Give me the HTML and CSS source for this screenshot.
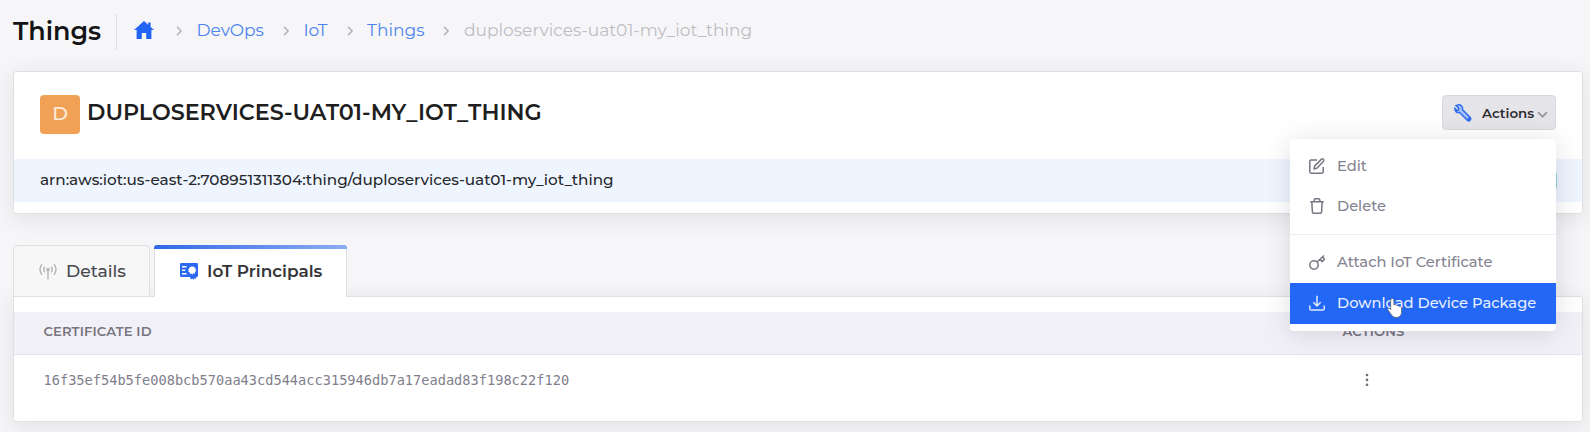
FILE: index.html
```html
<!DOCTYPE html>
<html lang="en">
<head>
<meta charset="utf-8">
<title>Things</title>
<link rel="stylesheet" href="styles.css">
</head>
<body>
<header class="topbar">
  <h1 class="page-title">Things</h1>
  <nav class="crumbs">
    <svg class="home" viewBox="0 0 20 18"><path d="M10 0 0 9h2.600v9h5.200v-6h4.400v6h5.200V9H20L16.600 6V1.500h-2.400v2.300z"/></svg>
    <svg class="sep" viewBox="0 0 6 10"><path d="M1 .8 5 5 1 9.200"/></svg>
    <a>DevOps</a>
    <svg class="sep" viewBox="0 0 6 10"><path d="M1 .8 5 5 1 9.200"/></svg>
    <a>IoT</a>
    <svg class="sep" viewBox="0 0 6 10"><path d="M1 .8 5 5 1 9.200"/></svg>
    <a>Things</a>
    <svg class="sep" viewBox="0 0 6 10"><path d="M1 .8 5 5 1 9.200"/></svg>
    <span class="current">duploservices-uat01-my_iot_thing</span>
  </nav>
</header>
<main>
  <section class="card summary">
    <div class="summary-head">
      <span class="avatar">D</span>
      <h2 class="name">DUPLOSERVICES-UAT01-MY_IOT_THING</h2>
      <div class="actions">
        <button class="actions-btn">
          <svg class="wrench" viewBox="0 0 18 18"><path d="M2.200 1.600 4.800 4.200 4.400 6 2.900 6.400.9 4.300C.5 7 2.600 9.100 5.600 8.500l7.900 7.900c1.800 1.500 4.300-1 2.800-2.800L8.500 5.700C9.100 2.700 6.900.3 3.900.9z"/><circle cx="14.800" cy="14.900" r=".7"/></svg>
          <span>Actions</span>
          <svg class="caret" viewBox="0 0 11 7"><path d="M1 1.200 5.500 5.700 10 1.200"/></svg>
        </button>
        <div class="menu">
          <a class="item"><svg viewBox="0 0 16 16"><path d="M8 2H2.200Q.8 2 .8 3.400v10.400q0 1.400 1.400 1.400h10.600q1.400 0 1.400-1.400V9"/><path d="M5 11l.6-2.900L12.500 1.100q1-.7 1.900.2t.2 1.900L7.800 10.300z"/></svg><span>Edit</span></a>
          <a class="item"><svg viewBox="0 0 16 16"><path d="M1.300 3.700h13.400M2.800 3.700l.6 10.300q.1 1.200 1.300 1.200h6.600q1.200 0 1.300-1.200l.6-10.300M5.200 3.500V2q0-1.200 1.200-1.200h3.200q1.200 0 1.200 1.200v1.500"/></svg><span>Delete</span></a>
          <hr class="rule">
          <a class="item attach"><svg viewBox="0 0 16 16"><circle cx="5" cy="11" r="4.200"/><path d="M8 8l7-6.500M11 5.300l2.100 2.300 2.500-2.300-2.100-2.300"/></svg><span>Attach IoT Certificate</span></a>
          <a class="item download"><svg viewBox="0 0 16 16"><path d="M.8 10.500v3.200q0 1.300 1.300 1.300h11.800q1.300 0 1.300-1.300v-3.200M8 .8v10M4.300 7.300 8 11l3.700-3.700"/></svg><span>Download Device Package</span></a>
          <svg class="pointer" viewBox="0 0 16 22"><path d="M4.200 1.800c1.400-.9 2.500 0 2.600 1.400V8c.8-.7 2-.4 2.400.5.9-.5 2-.2 2.400.8 1.300-.4 2.900 0 2.900 1.600v4.600c-.3 3.300-2 5-5.300 5-3.100 0-4.300-1.700-5.600-3.900L.9 12.800c-.3-1.400 1-2 1.900-1.100l.9 1V3z"/></svg>
        </div>
      </div>
    </div>
    <div class="arn"><span>arn:aws:iot:us-east-2:708951311304:thing/duploservices-uat01-my_iot_thing</span><i class="chip"></i></div>
  </section>
  <div class="tabs">
    <a class="tab tab-details"><svg viewBox="0 0 18 16"><path d="M9 6v10M5.800 3.200q-2.300 2.700 0 5.600M12.200 3.200q2.300 2.700 0 5.600M3 .8q-4.200 5 0 10.400M15 .8q4.200 5 0 10.400"/><circle cx="9" cy="6" r="1.700"/></svg><span>Details</span></a>
    <a class="tab tab-active"><svg viewBox="0 0 18 17"><path d="M1.300 0h15.400Q18 0 18 1.300v11.400q0 1.200-1.800 1.200v2.300l-1.300-1.100-1.300 1.700-1.300-1.300-1.500 1.100-.8-2.700H1.300Q0 13.900 0 12.700V1.300Q0 0 1.300 0z"/><path class="cut" d="M2 3.100h4.600v1.400H2zM2 6.500h3.200v1.400H2zM2 10h4.600v1.400H2zM11.800 2.700l1 1.200 1.500-.5.200 1.600 1.500.4-.6 1.400 1 1.200-1.400.8v1.600l-1.600-.1-1 1.300-1.100-1.100-1.500.5-.1-1.700-1.500-.5.700-1.300-.9-1.200 1.400-.7.100-1.600 1.500.2z"/></svg><span>IoT Principals</span></a>
  </div>
  <section class="card panel">
    <div class="row head"><span class="col-id">CERTIFICATE ID</span><span>ACTIONS</span></div>
    <div class="row body"><span class="mono">16f35ef54b5fe008bcb570aa43cd544acc315946db7a17eadad83f198c22f120</span><svg class="dots" viewBox="0 0 4 14"><circle cx="2" cy="2" r="1.300"/><circle cx="2" cy="6.900" r="1.300"/><circle cx="2" cy="11.800" r="1.300"/></svg></div>
  </section>
</main>
</body>
</html>
```
FILE: styles.css
```css
* { box-sizing: border-box; }
body {
  margin: 0;
  height: 432px;
  overflow: hidden;
  background: #f6f6f8;
  color: #1e1e20;
  font-family: Montserrat, Inter, sans-serif;
}
svg { display: block; flex: none; fill: none; overflow: visible; }
h1, h2 { margin: 0; font-weight: 600; white-space: nowrap; }
a, span { white-space: nowrap; }

.topbar { display: flex; align-items: center; height: 71px; padding: 0 13px 11px; }
.page-title { display: flex; align-items: center; width: 104px; height: 36px; margin-top: 4px; padding-bottom: 4px; border-right: 1px solid #dedee0; font-size: 25.4px; color: #141416; }
.crumbs { display: flex; align-items: center; margin: 0 0 0 17px; font-size: 17.05px; color: #4d84ee; }
.home { width: 20px; height: 18px; fill: #2264f5; }
.sep { width: 6px; height: 10px; margin: 2px 14.5px 0 19px; stroke: #b4b4b9; stroke-width: 1.6; }
.home + .sep { margin-left: 22px; }
.current { color: #bdbdc3; }

main { padding: 0 7px 0 13px; }
.card { border: 1px solid #e0e0e2; border-radius: 3px; background: #fff; box-shadow: 0 4px 22px rgba(40, 40, 50, .1); }
.summary { height: 143px; }
.summary-head { display: flex; align-items: flex-start; height: 87px; padding: 23px 26px 0; }
.avatar { display: flex; align-items: center; justify-content: center; width: 40px; height: 39px; padding-bottom: 2px; border-radius: 4px; background: #f0a156; color: #fdebd8; font-size: 19px; font-weight: 500; }
.name { margin: 3px 0 0 7px; font-size: 22.25px; line-height: 28px; }
.actions { position: relative; margin-left: auto; }
.actions-btn { display: flex; align-items: center; width: 114px; height: 35px; padding: 0 0 0 11px; border: 1px solid #d9d9dd; border-radius: 4px; background: #e5e4e8; font: 600 13.4px Montserrat, Inter, sans-serif; color: #2c2c31; }
.wrench { width: 18px; height: 18px; margin-right: 10px; fill: #a9c3f8; stroke: #2f6cf0; stroke-width: 1.5; }
.caret { width: 11px; height: 7px; margin: 4px 0 0 3px; stroke: #96969b; stroke-width: 1.7; }
.menu { position: absolute; z-index: 2; top: 44px; right: 0; width: 266px; height: 192px; padding-top: 7px; border-radius: 4px; background: #fff; box-shadow: 0 3px 26px rgba(60, 60, 90, .17); font-size: 14.7px; font-weight: 500; color: #848390; }
.item { display: flex; align-items: center; gap: 12px; height: 40px; padding-left: 19px; }
.item svg { width: 16px; height: 16px; stroke: #777683; stroke-width: 1.5; stroke-linejoin: round; }
.rule { height: 1px; margin: 8px 0; border: 0; background: #ededf1; }
.attach { padding-bottom: 2px; }
.download { height: 41px; padding-bottom: 1px; background: #2267f6; color: #e8effe; }
.item.download svg { stroke: #dde8fe; }
.menu .pointer { position: absolute; left: 97px; top: 158px; width: 16px; height: 22px; fill: #fff; stroke: #5a6475; stroke-width: .8; }
.arn { position: relative; display: flex; align-items: center; height: 43px; padding: 0 0 2px 26px; background: #eef5fe; font-size: 15.25px; font-weight: 500; color: #26282c; }
.chip { position: absolute; right: 25px; top: 14px; width: 4px; height: 16px; border-radius: 2px; background: #93d2df; }

.tabs { display: flex; position: relative; z-index: 1; margin-top: 31px; height: 52px; font-size: 17.2px; font-weight: 500; }
.tab { display: flex; align-items: center; height: 52px; border: 1px solid #e0e0e2; border-radius: 4px 4px 0 0; }
.tab svg { width: 18px; height: 17px; margin-right: 9px; }
.tab span { padding-bottom: 1px; }
.tab-details { width: 137px; margin-right: 4px; padding-left: 25px; background: #f7f7f8; color: #48484d; }
.tab-details svg { fill: #b5b5b9; stroke: none; }
.tab-details path { fill: none; stroke: #b5b5b9; stroke-width: 1.4; }
.tab-active { position: relative; width: 193px; padding-left: 25px; border-bottom: 0; background: #fff; font-size: 16.9px; font-weight: 600; color: #333338; }
.tab-active::before { content: ""; position: absolute; left: -1px; right: -1px; top: -1px; height: 4px; border-radius: 3px 3px 0 0; background: linear-gradient(90deg, #2f69e6, #8dabf2); }
.tab-active svg { fill: #2b69f2; }
.tab-active .cut { fill: #fff; }
.panel { height: 126px; margin-top: -1px; padding-top: 15px; border-radius: 0 3px 3px 3px; }
.row { display: flex; align-items: center; padding-left: 29.500px; }
.head { height: 43px; padding-bottom: 4px; border-bottom: 1px solid #e5e4ec; background: #f2f0f7; font-size: 13.2px; font-weight: 600; letter-spacing: .1px; color: #77757f; }
.col-id { width: 1299px; }
.body { height: 50px; }
.mono { width: 1321px; font: 13.65px "DejaVu Sans Mono", monospace; color: #7f7e8c; }
.dots { width: 4px; height: 14px; fill: #6c6b78; }
```
